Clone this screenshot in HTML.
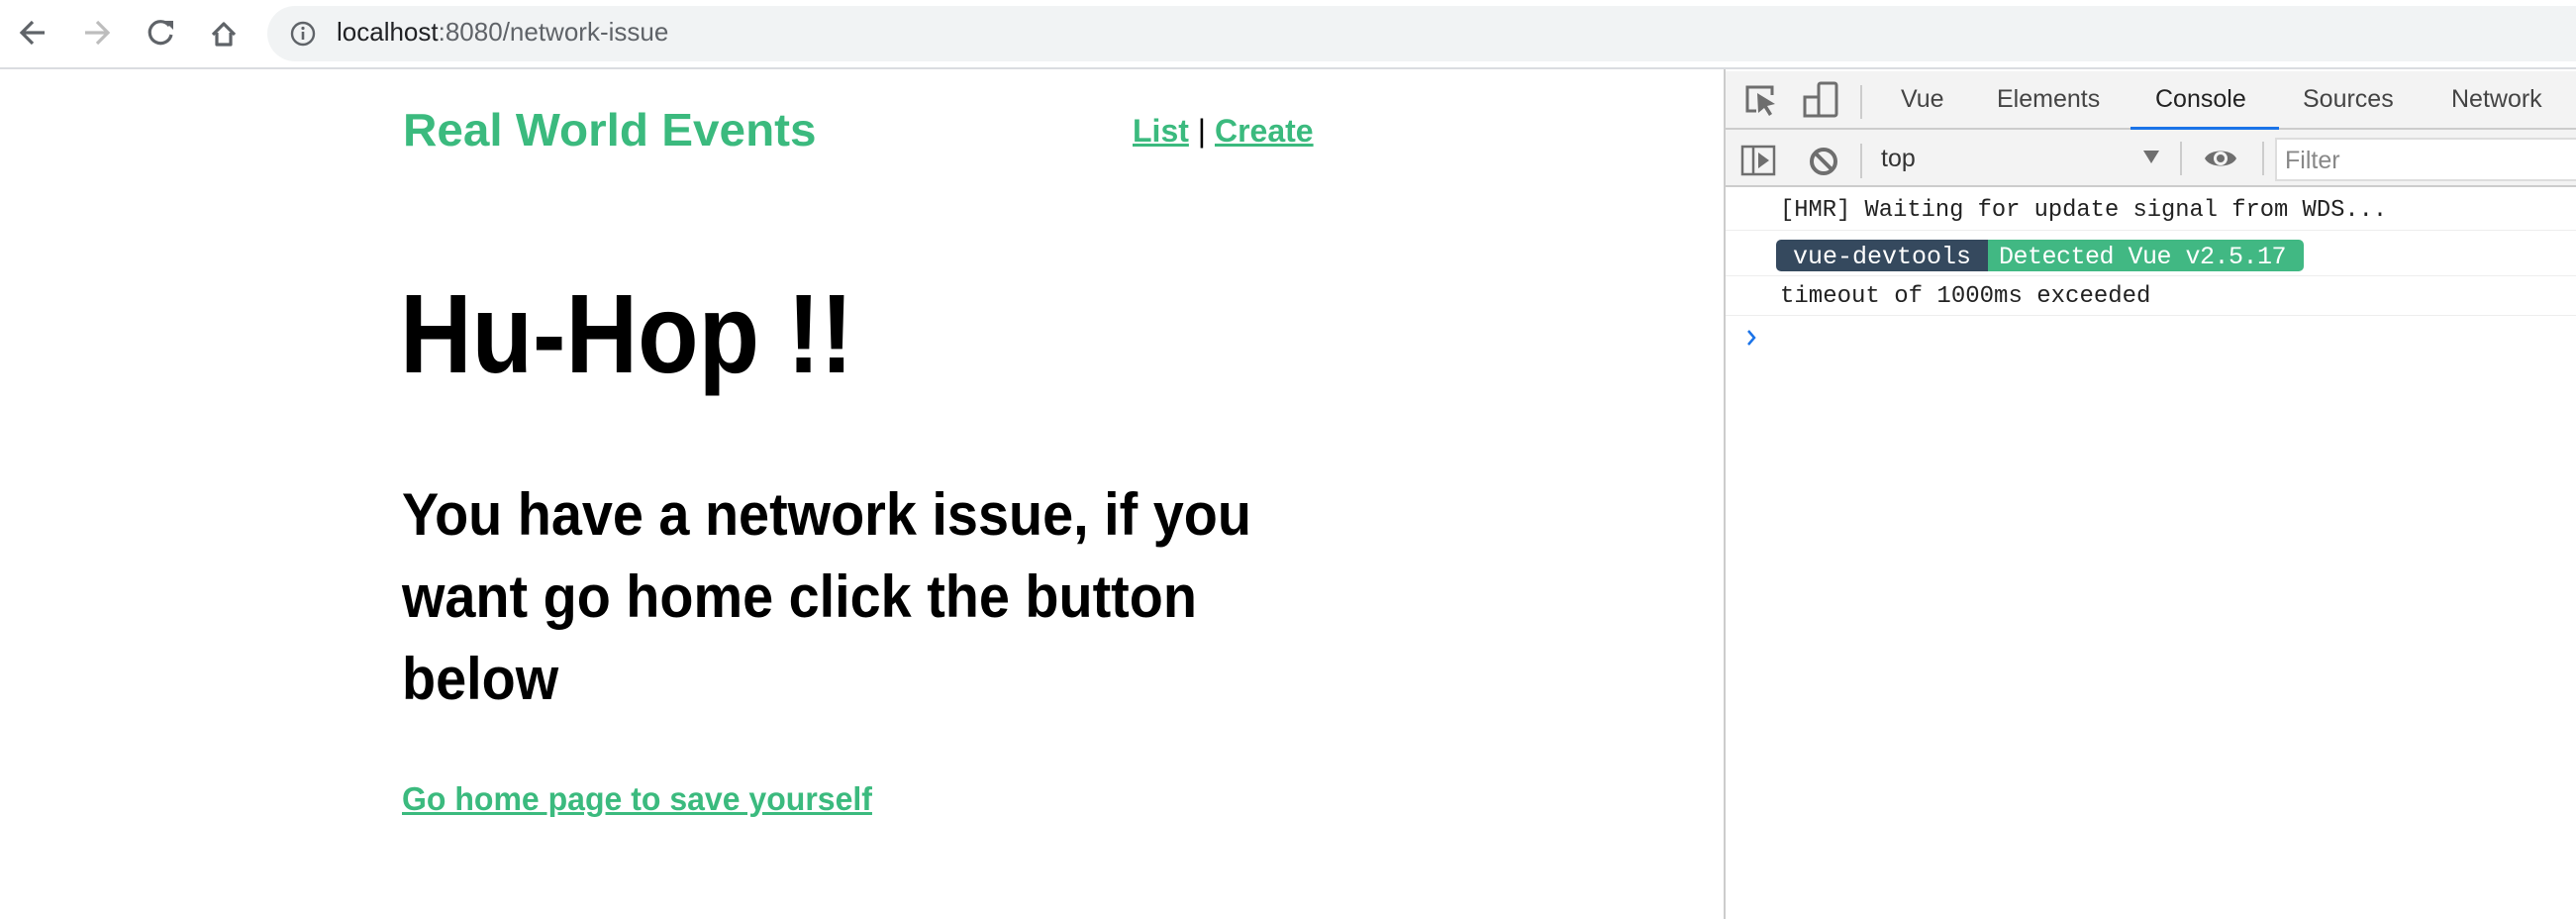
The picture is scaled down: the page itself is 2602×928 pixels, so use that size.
<!DOCTYPE html>
<html><head><meta charset="utf-8"><style>
*{margin:0;padding:0;box-sizing:border-box}
body{width:2602px;height:928px;overflow:hidden;background:#fff;font-family:"Liberation Sans",sans-serif;position:relative}
.a{position:absolute;white-space:nowrap;transform-origin:0 0}
.g{color:#3bba7e}
.mono{font-family:"Liberation Mono","DejaVu Sans Mono",monospace;font-size:24px;color:#222}
</style></head><body>
<div class="a" style="left:0;top:0;width:2602px;height:70px;background:#fff;border-bottom:2px solid #dadce0"></div>
<svg class="a" style="left:0;top:0" width="270" height="70" viewBox="0 0 270 70">
<path d="M45 33H23M33 22L22 33L33 44" stroke="#5f6368" stroke-width="3.2" fill="none"/>
<path d="M86 33H108M98 22L109 33L98 44" stroke="#bdbdbd" stroke-width="3.2" fill="none"/>
<path d="M171 26A11 11 0 1 0 173 35" stroke="#5f6368" stroke-width="3.2" fill="none"/>
<path d="M166 21L175 21L175 30Z" fill="#5f6368"/>
<path d="M215 35L226 24L237 35M219 33V45H233V33" stroke="#5f6368" stroke-width="3.2" fill="none" stroke-linejoin="round"/>
</svg>
<div class="a" style="left:270px;top:6px;width:2400px;height:56px;background:#f1f3f4;border-radius:28px"></div>
<svg class="a" style="left:292px;top:20px" width="28" height="28" viewBox="0 0 28 28"><circle cx="14" cy="14" r="11" stroke="#5f6368" stroke-width="2.4" fill="none"/><path d="M14 12V20" stroke="#5f6368" stroke-width="2.6"/><circle cx="14" cy="8.5" r="1.6" fill="#5f6368"/></svg>
<div class="a" style="left:340px;top:17px;font-size:26px;color:#202124">localhost<span style="color:#5f6368">:8080/network-issue</span></div>

<div class="a g" style="left:407px;top:104px;font-size:46px;font-weight:bold;transform:scaleX(1.036)">Real World Events</div>
<div class="a" style="left:1144px;top:114px;font-size:32px;font-weight:bold;color:#2c3e50"><span class="g" style="text-decoration:underline">List</span> <span style="font-weight:normal;color:#000">|</span> <span class="g" style="text-decoration:underline">Create</span></div>
<div class="a" style="left:404px;top:272px;font-size:113px;font-weight:bold;color:#000;transform:scaleX(0.89)">Hu-Hop !!</div>
<div class="a" style="left:406px;top:478px;font-size:60px;font-weight:bold;color:#000;line-height:83px;transform:scaleX(0.93)">You have a network issue, if you<br>want go home click the button<br>below</div>
<div class="a g" style="left:406px;top:788px;font-size:33px;font-weight:bold;text-decoration:underline;transform:scaleX(0.97)">Go home page to save yourself</div>

<div class="a" style="left:1741px;top:70px;width:861px;height:858px;background:#fff;border-left:2px solid #ccc"></div>
<div class="a" style="left:1743px;top:72px;width:859px;height:59px;background:#f3f3f3;border-bottom:2px solid #ccc"></div>
<div class="a" style="left:1743px;top:131px;width:859px;height:58px;background:#f3f3f3;border-bottom:2px solid #ccc"></div>
<svg class="a" style="left:1743px;top:72px" width="160" height="117" viewBox="0 0 160 117">
<path d="M31 40H22V16H47V24" stroke="#6e6e6e" stroke-width="3" fill="none"/>
<path d="M32 22L50 33L42 35L47 43L44 45L39 37L33 42Z" fill="#6e6e6e"/>
<rect x="94" y="12" width="18" height="33" rx="2" stroke="#6e6e6e" stroke-width="3" fill="none"/>
<rect x="80" y="26" width="14" height="19" stroke="#6e6e6e" stroke-width="3" fill="none"/>
<line x1="137" y1="14" x2="137" y2="48" stroke="#ccc" stroke-width="2"/>
<rect x="17" y="76" width="32" height="28" stroke="#6e6e6e" stroke-width="2.5" fill="none"/>
<line x1="28" y1="76" x2="28" y2="104" stroke="#6e6e6e" stroke-width="2.5"/>
<path d="M33 82L44 90L33 98Z" fill="#6e6e6e"/>
<line x1="137" y1="73" x2="137" y2="108" stroke="#ccc" stroke-width="2"/>
</svg>
<svg class="a" style="left:1826px;top:147px" width="32" height="32" viewBox="0 0 32 32"><circle cx="16" cy="16" r="12" stroke="#6e6e6e" stroke-width="4" fill="none"/><line x1="8" y1="8" x2="24" y2="24" stroke="#6e6e6e" stroke-width="4"/></svg>
<div class="a" style="left:1920px;top:86px;font-size:25px;color:#444">Vue</div>
<div class="a" style="left:2017px;top:86px;font-size:25px;color:#444">Elements</div>
<div class="a" style="left:2177px;top:86px;font-size:25px;color:#222">Console</div>
<div class="a" style="left:2152px;top:128px;width:150px;height:3px;background:#1a73e8"></div>
<div class="a" style="left:2326px;top:86px;font-size:25px;color:#444">Sources</div>
<div class="a" style="left:2476px;top:86px;font-size:25px;color:#444">Network</div>
<div class="a" style="left:1900px;top:146px;font-size:25px;color:#333">top</div>
<svg class="a" style="left:2164px;top:150px" width="18" height="16"><path d="M1 2H17L9 15Z" fill="#6e6e6e"/></svg>
<div class="a" style="left:2202px;top:143px;width:2px;height:34px;background:#ccc"></div>
<svg class="a" style="left:2226px;top:146px" width="34" height="28" viewBox="0 0 34 28"><path d="M1 14C6 4 28 4 33 14C28 24 6 24 1 14Z" fill="#6e6e6e"/><circle cx="17" cy="14" r="7" fill="#f3f3f3"/><circle cx="17" cy="14" r="4" fill="#6e6e6e"/></svg>
<div class="a" style="left:2285px;top:143px;width:2px;height:34px;background:#ccc"></div>
<div class="a" style="left:2298px;top:139px;width:310px;height:44px;background:#fff;border:2px solid #ddd"></div>
<div class="a" style="left:2308px;top:148px;font-size:25px;color:#888">Filter</div>

<div class="a mono" style="left:1798px;top:199px;transform:scaleX(0.99)">[HMR] Waiting for update signal from WDS...</div>
<div class="a" style="left:1743px;top:232px;width:859px;height:1px;background:#eee"></div>
<div class="a mono" style="left:1794px;top:242px;height:32px;width:214px;background:#35495e;color:#fff;border-radius:5px 0 0 5px;padding:3px 0 0 17px;font-size:25px">vue-devtools</div>
<div class="a mono" style="left:2008px;top:242px;height:32px;width:319px;background:#41b883;color:#fff;border-radius:0 5px 5px 0;padding:3px 0 0 11px;font-size:25px;letter-spacing:-0.5px">Detected Vue v2.5.17</div>
<div class="a" style="left:1743px;top:278px;width:859px;height:1px;background:#eee"></div>
<div class="a mono" style="left:1798px;top:286px">timeout of 1000ms exceeded</div>
<div class="a" style="left:1743px;top:318px;width:859px;height:1px;background:#eee"></div>
<svg class="a" style="left:1762px;top:331px" width="14" height="20"><path d="M4 3L10 10L4 17" stroke="#1a73e8" stroke-width="2.5" fill="none"/></svg>
</body></html>
